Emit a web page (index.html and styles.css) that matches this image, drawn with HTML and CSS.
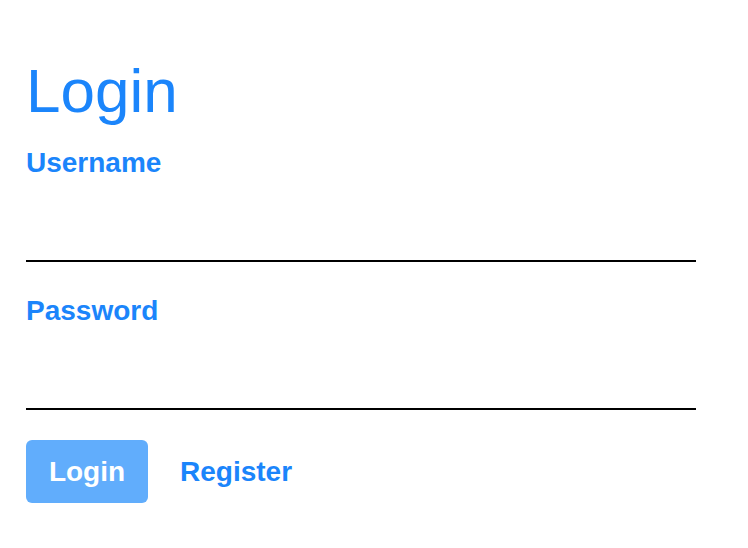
FILE: index.html
```html
<!DOCTYPE html>
<html>
<head>
<meta charset="utf-8">
<link rel="stylesheet" href="styles.css">
</head>
<body>
<main class="page">
  <h1 class="title">Login</h1>
  <form class="form">
    <label class="label" for="u">Username</label>
    <input class="field" id="u" type="text">
    <label class="label" for="p">Password</label>
    <input class="field" id="p" type="password">
    <div class="actions">
      <button type="button" class="btn">Login</button>
      <a class="link">Register</a>
    </div>
  </form>
</main>
</body>
</html>
```
FILE: styles.css
```css
html, body {
  margin: 0;
  padding: 0;
  background: #fff;
}
body {
  font-family: "Liberation Sans", Arial, Helvetica, sans-serif;
  color: #1b85fb;
}
.page {
  padding: 55px 0 0 26px;
  width: 670px;
}
.title {
  margin: 0 0 20px 0;
  font-size: 62px;
  line-height: 72px;
  font-weight: 400;
  color: #1b85fb;
}
.form {
  display: flex;
  flex-direction: column;
}
.label {
  display: block;
  font-size: 28px;
  line-height: 32px;
  font-weight: 700;
  color: #1b85fb;
}
.field {
  display: block;
  box-sizing: border-box;
  height: 83px;
  margin: 0 0 33px 0;
  width: 670px;
  border: none;
  border-bottom: 2px solid #000;
  outline: none;
  background: transparent;
  font-size: 24px;
  font-family: inherit;
  padding: 0;
}
.field + .label + .field {
  margin-bottom: 30px;
}
.actions {
  display: flex;
  align-items: center;
  gap: 32px;
}
.btn {
  width: 122px;
  height: 63px;
  border: none;
  border-radius: 6px;
  background: #61adfc;
  color: #fff;
  font-family: inherit;
  font-size: 28px;
  font-weight: 700;
  padding: 0;
}
.link {
  font-size: 28px;
  font-weight: 700;
  color: #1b85fb;
}
```
